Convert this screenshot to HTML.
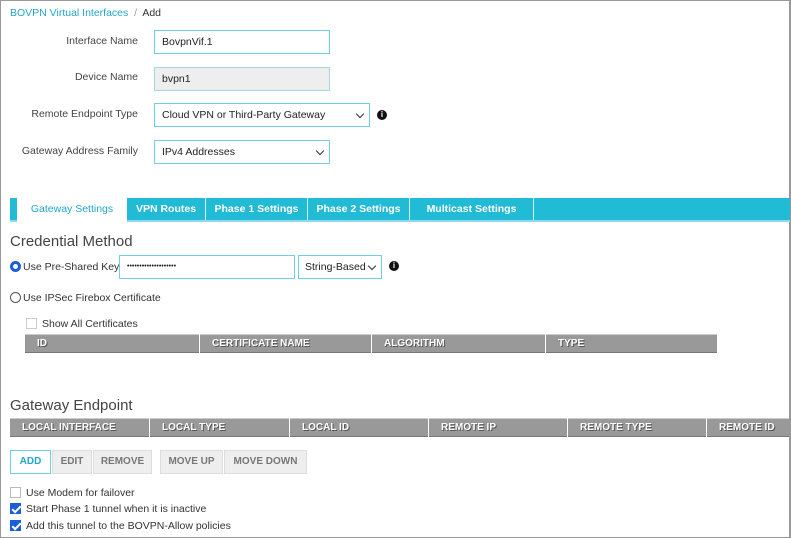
<!DOCTYPE html>
<html><head><style>
*{box-sizing:border-box;margin:0;padding:0}
body{width:791px;height:538px;background:#fff;font-family:"Liberation Sans",sans-serif;font-size:10.5px;color:#333;position:relative;overflow:hidden}
.frame{position:absolute;left:0;top:0;width:791px;height:538px;border:1px solid #999;border-right:2px solid #999}
.a{position:absolute;white-space:nowrap}
.lbl{position:absolute;text-align:right;width:138px;left:0;color:#444}
.inp{position:absolute;border:1px solid #6fd0e4;height:24px;padding:0 7px;line-height:22px;font-size:10.5px;color:#222;background:#fff;white-space:nowrap}
.chev{position:absolute;right:6px;top:7px;width:6px;height:6px;border-right:1.5px solid #333;border-bottom:1.5px solid #333;transform:rotate(45deg)}
.info{position:absolute;width:10px;height:10px;border-radius:50%;background:#111;color:#fff;font-size:8px;font-weight:bold;text-align:center;line-height:10px}
.tabs{position:absolute;left:10px;top:198px;width:780px;height:24px;background:#22bbd6;border-bottom:2px solid #8fd9ea}
.tab{position:absolute;top:0;height:22px;line-height:22px;color:#fff;font-weight:bold;text-align:center;border-right:1px solid #d8f2f8;font-size:10.5px}
.th{position:absolute;height:19px;background:#999;border-top:1px solid #ccc;border-bottom:1px solid #777;color:#fff;font-weight:bold;font-size:10px;line-height:18px;padding-left:12px;text-shadow:1px 1px 0 #555;font-family:"Liberation Sans",sans-serif;white-space:nowrap}
h2{position:absolute;font-weight:normal;font-size:15px;color:#444}
.btn{position:absolute;top:450px;height:24px;line-height:22px;background:#eee;border:1px solid #ddd;color:#777;font-weight:bold;text-align:center;font-size:10px}
.cb{position:absolute;width:11px;height:11px;border:1px solid #bbb;background:#fff}
.cb.on{background:#1a5fd6;border-color:#1a5fd6}
.cb.on:after{content:"";position:absolute;left:3px;top:0;width:3px;height:7px;border-right:2px solid #fff;border-bottom:2px solid #fff;transform:rotate(45deg)}
.rad{position:absolute;width:11px;height:11px;border-radius:50%;border:1px solid #555;background:#fff}
</style></head><body>
<div class="frame"></div>
<div class="a" style="left:10px;top:7px;color:#22a6c8">BOVPN Virtual Interfaces <span style="color:#999">&nbsp;/&nbsp;</span> <span style="color:#333">Add</span></div>

<div class="lbl" style="top:35px">Interface Name</div>
<div class="inp" style="left:154px;top:30px;width:176px">BovpnVif.1</div>
<div class="lbl" style="top:71px">Device Name</div>
<div class="inp" style="left:154px;top:67px;width:176px;background:#eee;border-color:#9fd9e6">bvpn1</div>
<div class="lbl" style="top:108px">Remote Endpoint Type</div>
<div class="inp" style="left:154px;top:103px;width:216px">Cloud VPN or Third-Party Gateway<div class="chev"></div></div>
<div class="info" style="left:377px;top:110px">i</div>
<div class="lbl" style="top:145px">Gateway Address Family</div>
<div class="inp" style="left:154px;top:140px;width:176px">IPv4 Addresses<div class="chev"></div></div>

<div class="tabs">
<div class="tab" style="left:7px;width:110px;background:#fff;color:#22a6c8;font-weight:normal;height:24px;border:none">Gateway Settings</div>
<div class="tab" style="left:117px;width:79px">VPN Routes</div>
<div class="tab" style="left:196px;width:102px">Phase 1 Settings</div>
<div class="tab" style="left:298px;width:102px">Phase 2 Settings</div>
<div class="tab" style="left:400px;width:124px">Multicast Settings</div>
</div>

<h2 style="left:10px;top:233px">Credential Method</h2>
<div class="rad" style="left:10px;top:261px;border:3px solid #1a5fd6"></div>
<div class="a" style="left:23px;top:261px">Use Pre-Shared Key</div>
<div class="inp" style="left:119px;top:255px;width:176px;font-size:7px;letter-spacing:0">••••••••••••••••••••</div>
<div class="inp" style="left:298px;top:255px;width:84px;padding-left:6px">String-Based<div class="chev"></div></div>
<div class="info" style="left:389px;top:261px">i</div>
<div class="rad" style="left:10px;top:292px"></div>
<div class="a" style="left:23px;top:292px">Use IPSec Firebox Certificate</div>
<div class="cb" style="left:26px;top:318px;border-color:#ccc"></div>
<div class="a" style="left:42px;top:318px">Show All Certificates</div>

<div class="th" style="left:25px;top:334px;width:174px">ID</div>
<div class="th" style="left:200px;top:334px;width:171px">CERTIFICATE NAME</div>
<div class="th" style="left:372px;top:334px;width:173px">ALGORITHM</div>
<div class="th" style="left:546px;top:334px;width:171px">TYPE</div>

<h2 style="left:10px;top:397px">Gateway Endpoint</h2>
<div class="th" style="left:10px;top:418px;width:139px">LOCAL INTERFACE</div>
<div class="th" style="left:150px;top:418px;width:139px">LOCAL TYPE</div>
<div class="th" style="left:290px;top:418px;width:138px">LOCAL ID</div>
<div class="th" style="left:429px;top:418px;width:138px">REMOTE IP</div>
<div class="th" style="left:568px;top:418px;width:138px">REMOTE TYPE</div>
<div class="th" style="left:707px;top:418px;width:82px">REMOTE ID</div>

<div class="btn" style="left:10px;width:41px;background:#fff;border-color:#6fd0e4;color:#22a6c8">ADD</div>
<div class="btn" style="left:52px;width:40px">EDIT</div>
<div class="btn" style="left:93px;width:59px">REMOVE</div>
<div class="btn" style="left:160px;width:63px">MOVE UP</div>
<div class="btn" style="left:224px;width:83px">MOVE DOWN</div>

<div class="cb" style="left:10px;top:487px"></div>
<div class="a" style="left:26px;top:487px">Use Modem for failover</div>
<div class="cb on" style="left:10px;top:503px"></div>
<div class="a" style="left:26px;top:503px">Start Phase 1 tunnel when it is inactive</div>
<div class="cb on" style="left:10px;top:520px"></div>
<div class="a" style="left:26px;top:520px">Add this tunnel to the BOVPN-Allow policies</div>
</body></html>
